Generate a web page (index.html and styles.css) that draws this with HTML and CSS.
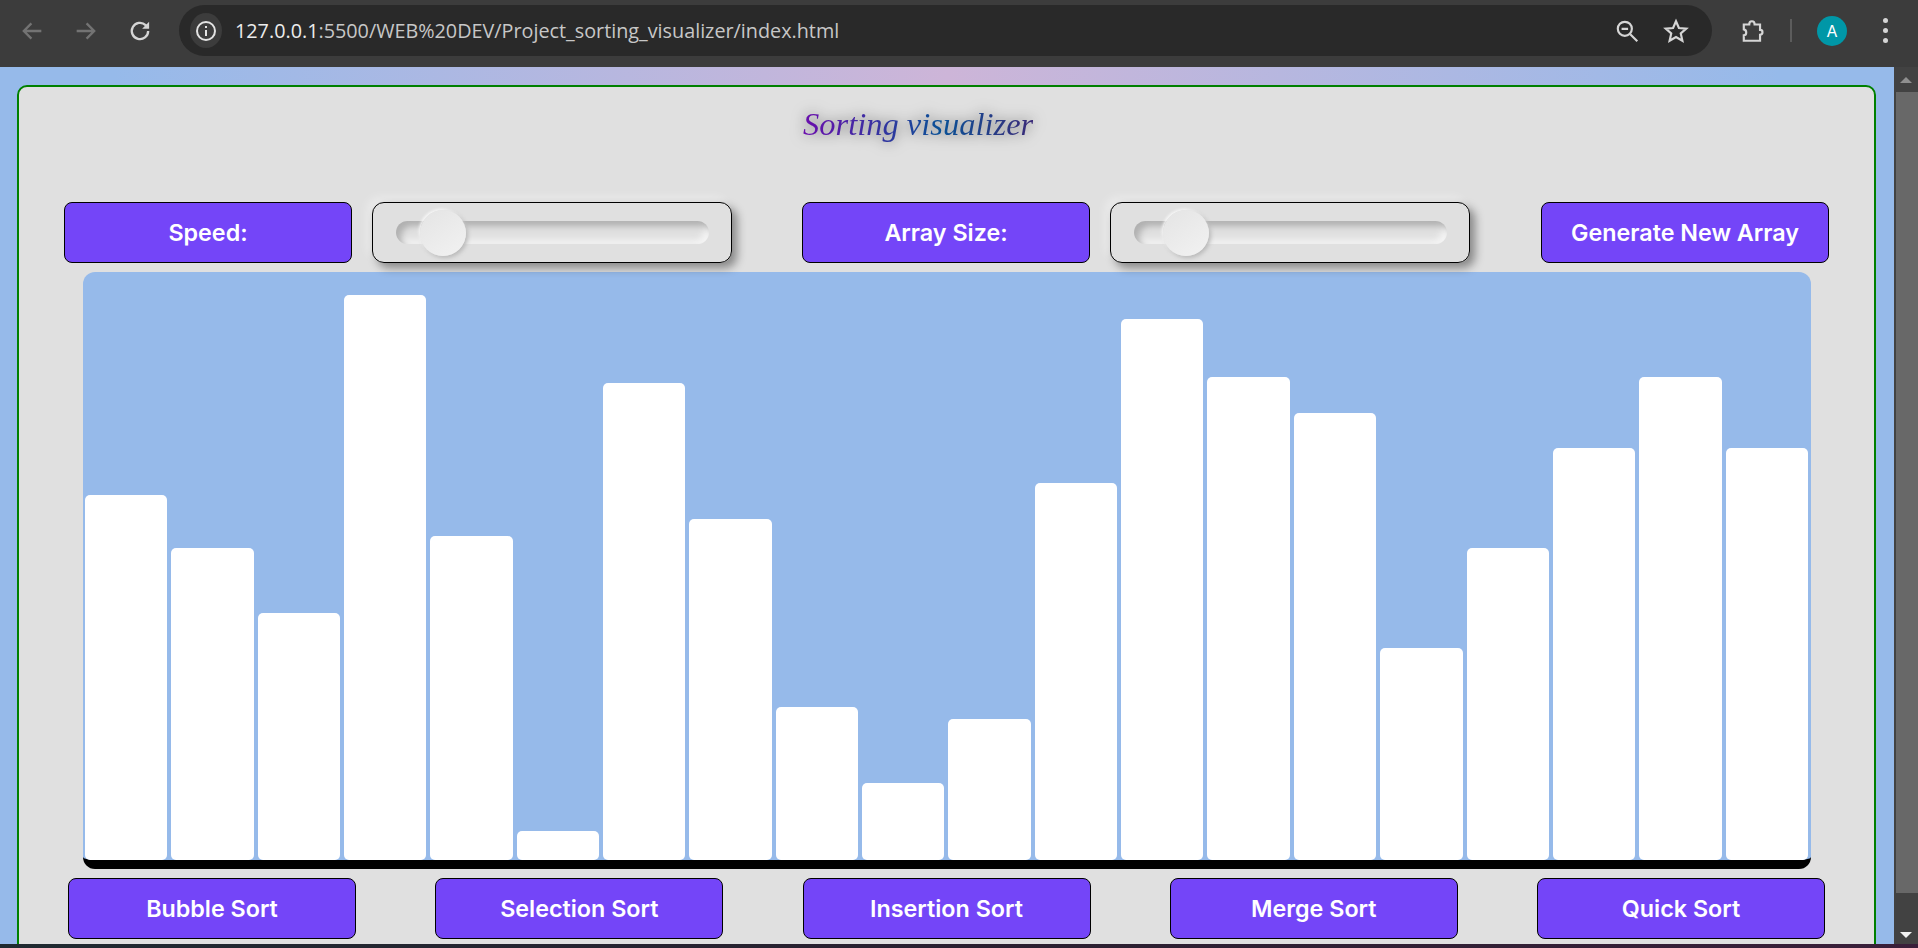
FILE: index.html
```html
<!DOCTYPE html>
<html>
<head>
  <title>Sorting visualizer</title>
  <meta charset="UTF-8" />
  <meta name="viewport" content="width=device-width, initial-scale=1.0">
  <link rel="stylesheet" href="styles.css">
</head>
<body>
  <!-- browser toolbar -->
  <header class="toolbar">
    <div class="nav-icons">
      <svg class="nav-icon dim" viewBox="0 0 24 24"><path d="M20 12H5M11.5 5.5 5 12l6.500 6.500"/></svg>
      <svg class="nav-icon dim" viewBox="0 0 24 24"><path d="M4 12h15M12.500 5.500 19 12l-6.500 6.500"/></svg>
      <svg class="nav-icon" viewBox="0 0 24 24"><path d="M19 12a7 7 0 1 1-2.200-5.100L19 9"/><path class="solid" d="M19.800 4v6h-6z"/></svg>
    </div>
    <div class="omnibox">
      <span class="site-chip">
        <svg viewBox="0 0 24 24"><circle cx="12" cy="12" r="9"/><path d="M12 11v6"/><path d="M12 7v2"/></svg>
      </span>
      <span class="url"><span class="host">127.0.0.1</span>:5500/WEB%20DEV/Project_sorting_visualizer/index.html</span>
      <svg class="omni-icon" viewBox="0 0 24 24"><circle cx="10" cy="10" r="6.500"/><path d="M7 10h6M15 15l6.500 6.500"/></svg>
      <svg class="omni-icon star" viewBox="0 0 24 24"><path d="m12 3 2.700 6.200 6.800.6-5.100 4.500 1.500 6.700L12 17.500 6.100 21l1.500-6.700L2.500 9.800l6.800-.6z"/></svg>
    </div>
    <div class="tool-icons">
      <svg class="ext-icon" viewBox="0 0 24 24"><path d="M3.500 6h5c0-4 5-4 5 0h5v5c3 0 3 4 0 4.500V21h-15v-5c3 0 3-5 0-5.500z"/></svg>
      <span class="divider"></span>
      <span class="avatar">A</span>
      <span class="dots"><i></i><i></i><i></i></span>
    </div>
  </header>

  <div class="window">
    <main class="page">
      <div class="card">
        <h1 class="title">Sorting visualizer</h1>

        <div class="controls">
          <div class="control">
            <button class="btn">Speed:</button>
            <div class="slider-box"><input type="range" min="0" max="100" value="9"></div>
          </div>
          <div class="control">
            <button class="btn">Array Size:</button>
            <div class="slider-box"><input type="range" min="0" max="100" value="11"></div>
          </div>
          <button class="btn">Generate New Array</button>
        </div>

        <div class="bars">
          <div class="bar" style="height:365px"></div>
          <div class="bar" style="height:312px"></div>
          <div class="bar" style="height:247px"></div>
          <div class="bar" style="height:565px"></div>
          <div class="bar" style="height:324px"></div>
          <div class="bar" style="height:29px"></div>
          <div class="bar" style="height:477px"></div>
          <div class="bar" style="height:341px"></div>
          <div class="bar" style="height:153px"></div>
          <div class="bar" style="height:77px"></div>
          <div class="bar" style="height:141px"></div>
          <div class="bar" style="height:377px"></div>
          <div class="bar" style="height:541px"></div>
          <div class="bar" style="height:483px"></div>
          <div class="bar" style="height:447px"></div>
          <div class="bar" style="height:212px"></div>
          <div class="bar" style="height:312px"></div>
          <div class="bar" style="height:412px"></div>
          <div class="bar" style="height:483px"></div>
          <div class="bar" style="height:412px"></div>
        </div>

        <div class="algos">
          <button class="btn">Bubble Sort</button>
          <button class="btn">Selection Sort</button>
          <button class="btn">Insertion Sort</button>
          <button class="btn">Merge Sort</button>
          <button class="btn">Quick Sort</button>
        </div>
      </div>
    </main>

    <aside class="scrollbar">
      <span class="arrow up"></span>
      <span class="thumb"></span>
      <span class="arrow down"></span>
    </aside>
  </div>

  <div class="desktop-strip"></div>
</body>
</html>
```

FILE: styles.css
```css
* {
  box-sizing: border-box;
}
html, body {
  height: 100%;
}
body {
  margin: 0;
  display: flex;
  flex-direction: column;
  overflow: hidden;
  font-family: "Inter", "Liberation Sans", sans-serif;
}

/* toolbar */
.toolbar {
  height: 67px;
  flex: none;
  display: flex;
  align-items: flex-start;
  background: #3c3c3c;
  padding-top: 5px;
}
.nav-icons {
  width: 179px;
  height: 51px;
  flex: none;
  display: flex;
  align-items: center;
  gap: 26px;
  padding-left: 18px;
}
.nav-icon {
  width: 28px;
  height: 28px;
  fill: none;
  stroke: #d5d5d5;
  stroke-width: 2;
}
.nav-icon.dim {
  stroke: #737373;
}
.nav-icon .solid {
  fill: #d5d5d5;
  stroke: none;
}
.omnibox {
  width: 1533px;
  height: 51px;
  flex: none;
  display: flex;
  align-items: center;
  background: #292929;
  border-radius: 26px;
  padding: 0 23px 0 11px;
}
.site-chip {
  width: 32px;
  height: 35px;
  flex: none;
  display: flex;
  align-items: center;
  justify-content: center;
  border-radius: 50%;
  background: #3c3c3c;
}
.site-chip svg {
  width: 24px;
  height: 24px;
  fill: none;
  stroke: #e3e3e3;
  stroke-width: 2;
}
.url {
  flex: 1;
  margin-left: 13px;
  font-family: "Open Sans", sans-serif;
  font-size: 19.8px;
  color: #c7c7c7;
  white-space: nowrap;
}
.host {
  color: #ececec;
}
.omni-icon {
  width: 26px;
  height: 26px;
  fill: none;
  stroke: #d5d5d5;
  stroke-width: 2;
}
.omni-icon.star {
  margin-left: 23px;
}
.tool-icons {
  flex: 1;
  height: 51px;
  display: flex;
  align-items: center;
  padding-left: 28px;
}
.ext-icon {
  width: 26px;
  height: 26px;
  fill: none;
  stroke: #d5d5d5;
  stroke-width: 2;
}
.divider {
  width: 2px;
  height: 23px;
  margin-left: 24px;
  background: #5c5c5c;
}
.avatar {
  width: 30px;
  height: 30px;
  margin-left: 25px;
  border-radius: 50%;
  background: #0097a7;
  color: #fff;
  font-size: 16px;
  line-height: 30px;
  text-align: center;
}
.dots {
  margin-left: 36px;
  display: flex;
  flex-direction: column;
  gap: 5px;
}
.dots i {
  width: 5px;
  height: 5px;
  border-radius: 50%;
  background: #d5d5d5;
}

/* viewport */
.window {
  flex: 1;
  min-height: 0;
  display: flex;
}
.page {
  flex: 1;
  min-width: 0;
  overflow: hidden;
  padding: 18px 18px 0 17px;
  background: linear-gradient(90deg, #96baea 6%, #cdb5d8 50%, #96baea 94%);
}
.card {
  height: 900px;
  background: #e0e0e0;
  border: 2px solid #008000;
  border-radius: 10px;
}
.title {
  margin: 0 0 0 784px;
  width: fit-content;
  height: 115px;
  padding-top: 17px;
  font-family: "Liberation Serif", serif;
  font-style: italic;
  font-weight: 400;
  font-size: 32.5px;
  line-height: 40px;
  background: linear-gradient(90deg, #6a0dad 0%, #0a5196 60%, #3a2a78 100%);
  -webkit-background-clip: text;
  background-clip: text;
  color: transparent;
  filter: drop-shadow(0 0 7px rgba(0, 0, 0, 0.6));
}
.controls {
  display: flex;
  justify-content: space-between;
  padding: 0 45px;
}
.control {
  display: flex;
  gap: 20px;
}
.control:nth-child(2) {
  margin-right: 1px;
}
.btn {
  width: 288px;
  height: 61px;
  padding: 0 0 1px;
  border: 1px solid #000;
  border-radius: 8px;
  background: #7445f8;
  color: #fff;
  font-family: "Inter", "Liberation Sans", sans-serif;
  font-size: 23.3px;
  font-weight: 600;
}
.slider-box {
  width: 360px;
  height: 61px;
  display: flex;
  align-items: center;
  padding: 0 22px 0 23px;
  border: 1px solid #000;
  border-radius: 12px;
  box-shadow: 5px 5px 10px rgba(0, 0, 0, 0.4), -5px -5px 10px rgba(255, 255, 255, 0.35);
}
.slider-box input {
  -webkit-appearance: none;
  appearance: none;
  width: 100%;
  height: 46px;
  margin: 0;
  background: transparent;
}
.slider-box input::-webkit-slider-runnable-track {
  height: 23px;
  border-radius: 12px;
  background: #e0e0e0;
  box-shadow: inset 5px 5px 6px #b0b0b0, inset -4px -4px 6px #f4f4f4;
}
.slider-box input::-webkit-slider-thumb {
  -webkit-appearance: none;
  width: 46px;
  height: 46px;
  margin-top: -11.5px;
  border-radius: 50%;
  background: linear-gradient(145deg, #e4e4e4, #f2f2f2);
  box-shadow: 2px 2px 4px #b8b8b8, -1px -1px 3px #fff;
}
.bars {
  height: 597px;
  margin: 9px 63px 0 64px;
  padding-right: 1px;
  display: flex;
  align-items: flex-end;
  background: #96baea;
  border-bottom: 9px solid #000;
  border-radius: 12px;
}
.bar {
  flex: 1;
  margin: 0 2px;
  background: #fff;
  border-radius: 5px;
}
.algos {
  display: flex;
  justify-content: space-between;
  margin-top: 9px;
  padding: 0 49px;
}

/* scrollbar */
.scrollbar {
  width: 24px;
  flex: none;
  display: flex;
  flex-direction: column;
  align-items: center;
  background: #424242;
}
.arrow {
  flex: none;
  width: 0;
  height: 0;
  border-left: 6px solid transparent;
  border-right: 6px solid transparent;
}
.arrow.up {
  margin-top: 10px;
  border-bottom: 6px solid #8f8f8f;
}
.arrow.down {
  margin: 6px 0 6px;
  border-top: 6px solid #f1f1f1;
}
.thumb {
  flex: 1;
  align-self: flex-end;
  width: 22px;
  margin-top: 9px;
  margin-bottom: 33px;
  background: #686868;
}

.desktop-strip {
  height: 4px;
  flex: none;
  background: linear-gradient(90deg, #1f2a30 0%, #2a2030 50%, #3a1f3a 100%);
}
```
